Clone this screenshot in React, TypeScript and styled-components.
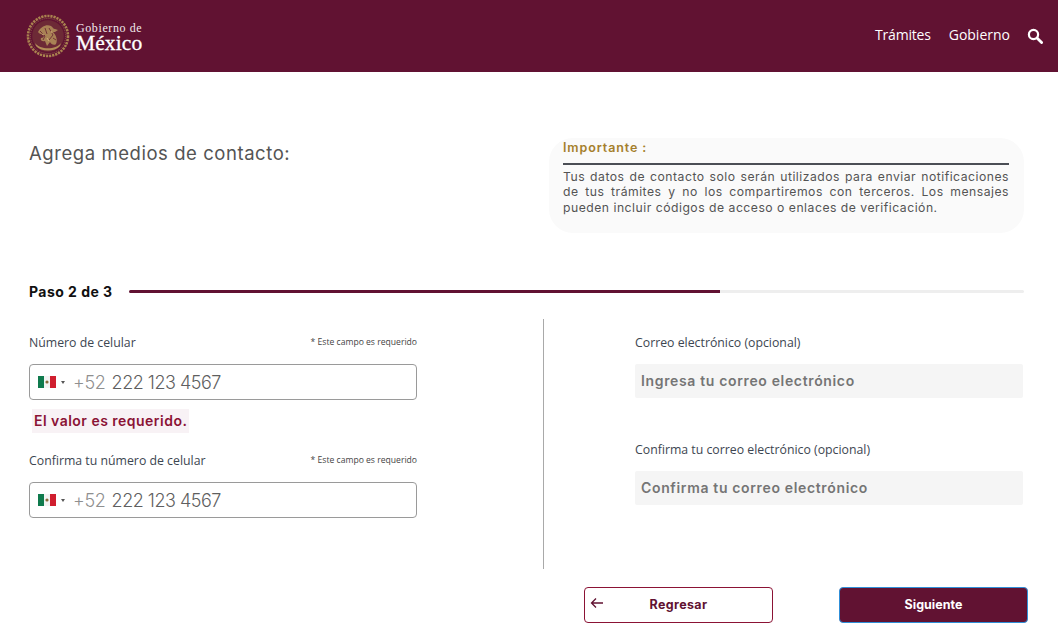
import React from "react";
import styled, { createGlobalStyle } from "styled-components";

const Global = createGlobalStyle`
  html, body { margin: 0; padding: 0; background: #fff; }
  body { font-family: "Open Sans", sans-serif; }
  * { box-sizing: border-box; }
`;
const Page = styled.div`width: 1058px; height: 641px; overflow: hidden; display: flex; flex-direction: column;`;
const Header = styled.header`
  height: 72px; background: #611232; display: flex; align-items: center;
  justify-content: space-between; padding: 0 15px 0 26px; flex: none;
`;
const Brand = styled.div`display: flex; align-items: center; gap: 6px;`;
const BrandText = styled.div`display: flex; flex-direction: column; color: #fff; font-family: "Liberation Serif", serif; margin-top: 3px;`;
const BrandTop = styled.span`font-size: 12px; line-height: 11px; letter-spacing: 0.6px; color: #f1e9ec;`;
const BrandBottom = styled.span`font-size: 21.5px; line-height: 15px; padding: 2px 0; font-weight: 400; -webkit-text-stroke: 0.3px #fff; letter-spacing: 0.1px;`;
const Nav = styled.nav`display: flex; align-items: center; gap: 18px; color: #fff; font-size: 14px; margin-top: -4px;`;
const NavLink = styled.span<{ $spacing?: number }>`letter-spacing: ${(p) => p.$spacing ?? 0}px;`;
const SearchIcon = styled.svg`width: 16px; height: 16px; display: block; margin: 3px 0 0 -1px;`;

const Main = styled.main`flex: 1; display: flex; flex-direction: column; padding: 66px 30px 0 29px;`;
const TopRow = styled.section`display: flex; justify-content: space-between; padding-right: 4px;`;
const Title = styled.h1`
  margin: 5px 0 0; font: 400 18.5px/20px Inter, sans-serif; color: #545454; letter-spacing: 0.56px;
`;
const Notice = styled.aside`
  width: 475px; height: 95px; border-radius: 24px; background: #fafafa; padding: 0 15px 0 14px;
  font-family: Inter, sans-serif;
`;
const NoticeTitle = styled.div`
  font-size: 12.5px; font-weight: 600; color: #a57f2c; line-height: 19px;
  border-bottom: 2px solid #4b4e55; height: 27px; letter-spacing: 0.9px;
`;
const NoticeBody = styled.p`
  margin: 0; font-size: 12.2px; line-height: 15.3px; color: #545454; text-align: justify; padding-top: 4px; letter-spacing: 0.5px;
`;
const StepRow = styled.div`display: flex; align-items: center; gap: 16px; margin-top: 48px; height: 20px; padding-right: 4px;`;
const StepLabel = styled.span`font: 700 14px Inter, sans-serif; color: #111; white-space: nowrap; letter-spacing: 0.47px;`;
const Track = styled.div`flex: 1; height: 3px; margin-top: 1px; background: #eeeeee; border-radius: 2px; overflow: hidden;`;
const Fill = styled.div`height: 100%; background: #611232;`;

const Form = styled.section`display: flex; margin-top: 18px; height: 250px;`;
const LeftCol = styled.div`width: 388px; padding-top: 14px;`;
const Divider = styled.div`width: 1px; background: #a9a9a9; margin-left: 126px;`;
const RightCol = styled.div`width: 388px; margin-left: 91px; padding-top: 14px;`;
const LabelRow = styled.div`display: flex; justify-content: space-between; align-items: center; height: 18px;`;
const Label = styled.label`font-size: 12.3px; font-weight: 500; color: #3d4651;`;
const Required = styled.span`font-size: 8.6px; color: #444;`;
const PhoneBox = styled.div`
  margin-top: 13px; height: 36px; border: 1px solid #9a9a9a; border-radius: 4px; display: flex; align-items: center;
  padding-left: 8px; font-family: Inter, sans-serif; font-size: 18px; font-weight: 300; color: #5f5f5f;
`;
const Flag = styled.svg`width: 18px; height: 12px; display: block; flex: none;`;
const Caret = styled.span`
  width: 0; height: 0; border: 2.5px solid transparent; border-top: 3px solid #555; border-bottom: 0; margin: 0 8px 0 5px; flex: none;
`;
const Dial = styled.span`color: #8f8f8f; margin-right: 6px; letter-spacing: -0.3px;`;
const Digits = styled.span`letter-spacing: -0.5px;`;
const ErrorMsg = styled.div`
  display: inline-block; margin: 9px 0 0 3px; background: #f8f2f5; color: #8b1335; font: 600 14px/24px Inter, sans-serif; padding: 0 2px; letter-spacing: 0.48px;
`;
const SecondLabel = styled(LabelRow)`margin-top: 18px;`;
const EmailGroup = styled.div`margin-bottom: 42px;`;
const EmailInput = styled.div`
  margin-top: 13px; height: 34px; background: #f5f5f5; border-radius: 2px; padding: 0 0 2px 6px; display: flex; align-items: center;
  font: 600 14px Inter, sans-serif; color: #757575; letter-spacing: 0.65px;
`;
const Actions = styled.div`display: flex; justify-content: flex-end; gap: 66px; margin: 18px 0 0 0;`;
const BackButton = styled.button`
  position: relative; width: 189px; height: 36px; border: 1px solid #8b1335; border-radius: 4px; background: #fff; color: #611232;
  font: 700 12.5px Inter, sans-serif; letter-spacing: 0.35px; cursor: pointer; padding: 0 0 2px;
`;
const BackArrow = styled.svg`position: absolute; left: 5px; top: 8px; width: 14px; height: 14px;`;
const NextButton = styled.button`
  width: 189px; height: 36px; border: 1px solid #2f8fd8; border-radius: 4px; background: #611232; color: #fff;
  font: 700 12.5px Inter, sans-serif; cursor: pointer; padding: 0 0 1px;
`;
const SealSvg = styled.svg`width: 44px; height: 44px; display: block; flex: none;`;

const Seal = () => (
  <SealSvg viewBox="0 0 44 44">
    <circle cx="22" cy="22" r="20" fill="none" stroke="#a9824f" strokeWidth="2.6" strokeDasharray="2.2 0.9" />
    <circle cx="22" cy="22" r="17.6" fill="none" stroke="#8a5f48" strokeWidth="1" strokeDasharray="1 1" />
    <circle cx="22" cy="22" r="15.8" fill="#6d2a36" />
    <path d="M12 18c3-6 9-8 13-6 2 1 2 3 4 3l3 1-3 2-2 0c3 3 5 8 3 12-2 2-5 0-6-2l-3 4-2-5c-3 1-5-1-4-3 2 0 3-1 3-3-2-1-5-1-6-3z" fill="#a98255" />
    <path d="M9 29c5 7 21 7 26 0l-1 3c-5 6-19 6-24 0z" fill="#b38d58" />
    <path d="M14 17l5 5-2 4M23 14l4 7-4 5M19 14l2 6M27 24l3 2M11 24l4-1" fill="none" stroke="#6d2a36" strokeWidth="0.9" />
    <path d="M16 20l2 1M21 24l2 3M25 17l1 2" stroke="#d8b47c" strokeWidth="0.9" />
  </SealSvg>
);
const MxFlag = () => (
  <Flag viewBox="0 0 18 12">
    <rect width="6" height="12" fill="#0f7a4d" />
    <rect x="6" width="6" height="12" fill="#f3f3f3" />
    <rect x="12" width="6" height="12" fill="#d01f2f" />
    <circle cx="9" cy="6" r="1.6" fill="#8a6a3a" />
  </Flag>
);
const Phone = () => (
  <PhoneBox>
    <MxFlag />
    <Caret />
    <Dial>+52</Dial>
    <Digits>222 123 4567</Digits>
  </PhoneBox>
);

export default function App() {
  return (
    <Page>
      <Global />
      <Header>
        <Brand>
          <Seal />
          <BrandText>
            <BrandTop>Gobierno de</BrandTop>
            <BrandBottom>México</BrandBottom>
          </BrandText>
        </Brand>
        <Nav>
          <NavLink $spacing={-0.2}>Trámites</NavLink>
          <NavLink>Gobierno</NavLink>
          <SearchIcon viewBox="0 0 16 16">
            <circle cx="6.5" cy="6.5" r="4.6" fill="none" stroke="#fff" strokeWidth="2.2" />
            <path d="M10 10l4.6 4.6" stroke="#fff" strokeWidth="2.8" strokeLinecap="round" />
          </SearchIcon>
        </Nav>
      </Header>
      <Main>
        <TopRow>
          <Title>Agrega medios de contacto:</Title>
          <Notice>
            <NoticeTitle>Importante :</NoticeTitle>
            <NoticeBody>
              Tus datos de contacto solo serán utilizados para enviar notificaciones de tus trámites y no los compartiremos con terceros. Los mensajes pueden incluir códigos de acceso o enlaces de verificación.
            </NoticeBody>
          </Notice>
        </TopRow>
        <StepRow>
          <StepLabel>Paso 2 de 3</StepLabel>
          <Track><Fill style={{ width: "66%" }} /></Track>
        </StepRow>
        <Form>
          <LeftCol>
            <LabelRow>
              <Label>Número de celular</Label>
              <Required>* Este campo es requerido</Required>
            </LabelRow>
            <Phone />
            <ErrorMsg>El valor es requerido.</ErrorMsg>
            <SecondLabel>
              <Label>Confirma tu número de celular</Label>
              <Required>* Este campo es requerido</Required>
            </SecondLabel>
            <Phone />
          </LeftCol>
          <Divider />
          <RightCol>
            <EmailGroup>
              <LabelRow><Label>Correo electrónico (opcional)</Label></LabelRow>
              <EmailInput>Ingresa tu correo electrónico</EmailInput>
            </EmailGroup>
            <EmailGroup>
              <LabelRow><Label>Confirma tu correo electrónico (opcional)</Label></LabelRow>
              <EmailInput>Confirma tu correo electrónico</EmailInput>
            </EmailGroup>
          </RightCol>
        </Form>
        <Actions>
          <BackButton>
            <BackArrow viewBox="0 0 14 14">
              <path d="M13 7H1.5M6 2.5L1.5 7 6 11.5" fill="none" stroke="#611232" strokeWidth="1.3" />
            </BackArrow>
            Regresar
          </BackButton>
          <NextButton>Siguiente</NextButton>
        </Actions>
      </Main>
    </Page>
  );
}
